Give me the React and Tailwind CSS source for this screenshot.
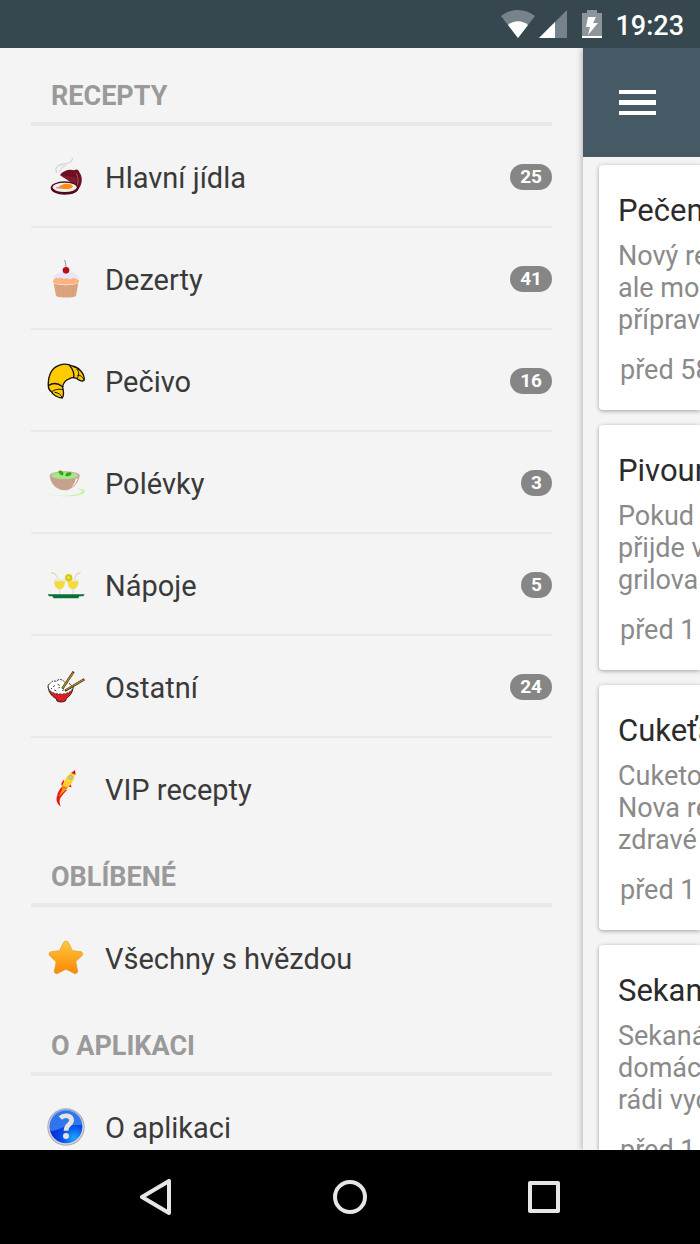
import { useState } from 'react'

function MealIcon() {
  return (
    <svg viewBox="0 0 114 114" className="size-[38px]" aria-hidden="true">
      <path d="M30 45C20 30 34 20 50 18C66 16 78 10 76 0" fill="none" stroke="#d6d6d6" strokeWidth="4" />
      <path d="M40 44C36 34 46 26 58 22" fill="none" stroke="#e2e2e2" strokeWidth="5" />
      <path d="M39 51C48 38 66 32 82 37C86 32 96 34 97 43C107 55 107 77 96 91C90 101 80 108 68 109L86 82Z" fill="#6e0f24" />
      <path d="M39 51L86 82C88 72 90 66 88 58Z" fill="#7d1a2d" />
      <path d="M87 46C95 58 95 74 89 86" fill="none" stroke="#a85b68" strokeWidth="3" />
      <ellipse cx="53" cy="90" rx="42" ry="20" fill="#4e0a1b" />
      <ellipse cx="53" cy="88" rx="36" ry="14" fill="#f4ecea" />
      <path d="M27 87C34 90 38 80 50 80C64 76 78 80 76 88C66 96 44 93 27 91Z" fill="#c9a07a" />
      <ellipse cx="60" cy="85" rx="17" ry="8" fill="#ff8c0a" />
    </svg>
  )
}

function CupcakeIcon() {
  return (
    <svg viewBox="0 0 114 114" className="size-[38px]" aria-hidden="true">
      <path d="M52 0C56 4 56 12 57 24" fill="none" stroke="#7b4a55" strokeWidth="2" />
      <path d="M20 58C16 44 34 36 57 36C80 36 98 44 95 58C84 66 32 66 20 58Z" fill="#e8e6fa" />
      <circle cx="57" cy="31" r="10" fill="#b5101c" />
      <path d="M18 66C18 56 26 58 28 52C34 60 42 50 46 55C52 62 58 50 64 56C70 62 76 50 84 55C88 60 97 56 96 66C92 76 22 76 18 66Z" fill="#ffb27d" />
      <path d="M20 70C40 78 74 78 94 70L87 108C76 114 38 114 27 108Z" fill="#dca47e" />
      <path d="M34 76L38 110M48 78L50 111M64 78L63 111M80 76L76 110" stroke="#d69d76" strokeWidth="2" />
    </svg>
  )
}

function CroissantIcon() {
  return (
    <svg viewBox="0 0 114 114" className="size-[38px]" aria-hidden="true">
      <g fill="#ffcb00" stroke="#111" strokeWidth="4" strokeLinejoin="round" strokeLinecap="round">
        <path d="M4 72C2 44 12 18 36 10C48 5 64 6 76 12C96 16 112 34 112 54C108 60 98 56 90 50C82 46 74 46 68 50C56 54 48 64 47 76C50 88 50 102 46 108C34 108 16 98 14 90C8 86 4 80 4 72Z" />
        <path d="M5 70C18 62 34 64 47 74" fill="none" />
        <path d="M14 90C22 82 36 80 47 83M24 91C34 92 42 98 46 107" fill="none" strokeWidth="3" />
        <path d="M68 10C76 20 82 36 80 47" fill="none" />
        <path d="M90 22C98 30 96 42 90 50M92 40C100 38 106 44 111 53" fill="none" strokeWidth="3" />
      </g>
    </svg>
  )
}

function SoupIcon() {
  return (
    <svg viewBox="0 0 114 114" className="size-[38px]" aria-hidden="true">
      <path d="M2 91C30 96 76 98 100 88C108 84 106 78 92 75C110 72 120 82 108 89C84 100 26 98 2 91Z" fill="#c3f3a2" />
      <path d="M8 34C10 56 22 70 37 76C46 80 60 80 67 76C84 68 96 54 98 34Z" fill="#c6a28e" />
      <path d="M86 44C84 58 76 66 70 70C84 64 92 52 92 42Z" fill="#f7efea" />
      <ellipse cx="53" cy="34" rx="45" ry="12" fill="#c8ae9e" />
      <ellipse cx="53" cy="35" rx="39" ry="10" fill="#a5e88a" />
      <path d="M34 24C36 18 46 18 49 26C52 33 44 36 40 32ZM55 32C58 23 72 23 74 28C74 37 60 39 55 35Z" fill="#38a511" />
    </svg>
  )
}

function DrinksIcon() {
  return (
    <svg viewBox="0 0 114 114" className="size-[38px]" aria-hidden="true">
      <path d="M12 20L24 23L36 42M101 20L90 23L80 42" fill="none" stroke="#efc8a4" strokeWidth="3" />
      <path d="M22 38H54C56 60 48 68 38 72C26 68 20 58 22 38ZM62 38H94C96 60 88 68 78 72C66 68 60 58 62 38Z" fill="#e6ebe8" />
      <path d="M22 46H54C55 60 48 68 38 70C27 67 21 60 22 46ZM62 46H94C95 60 88 68 78 70C67 67 61 60 62 46Z" fill="#f6da3c" />
      <path d="M38 70V86M78 70V86" stroke="#d5ddd8" strokeWidth="3" />
      <circle cx="65" cy="35" r="11" fill="#d7c90c" />
      <circle cx="65" cy="35" r="4" fill="#efe56b" />
      <path d="M2 85H113L109 91H97L94 97H20L16 91H6Z" fill="#08713a" />
    </svg>
  )
}

function RiceIcon() {
  return (
    <svg viewBox="0 0 114 114" className="size-[38px]" aria-hidden="true">
      <path d="M4 50C1 68 14 86 28 92L30 99C36 103 50 103 56 98L58 91C70 84 79 70 78 54Z" fill="#e01c22" stroke="#222" strokeWidth="3" />
      <path d="M4 60C2 46 12 46 14 42C20 34 28 44 30 38C38 30 52 38 54 44C64 42 74 50 78 60C72 74 54 80 38 78C22 78 8 72 4 60Z" fill="#fff" stroke="#333" strokeWidth="3" strokeDasharray="7 3" />
      <path d="M18 56L23 53M32 49L38 52M22 66L28 69M46 68L51 65M34 61L38 57M62 64L67 61M12 63L15 60" stroke="#333" strokeWidth="3" />
      <path d="M46 62L80 11M54 68L112 34" stroke="#2c220a" strokeWidth="7" />
      <path d="M47 60L79 13M56 66L110 35" stroke="#b28a24" strokeWidth="4" />
    </svg>
  )
}

function RocketIcon() {
  return (
    <svg viewBox="0 0 114 114" className="size-[38px]" aria-hidden="true">
      <path d="M43 51C48 60 60 62 63 58C54 66 46 76 40 84C36 94 38 100 41 110C28 100 26 88 31 76C31 68 38 60 43 51Z" fill="#e31b13" />
      <path d="M48 53C44 62 38 70 36 80C42 72 52 64 60 57Z" fill="#ff9d0a" />
      <path d="M50 29L43 40L44 48L55 42ZM68 36L74 52L65 50L61 44Z" fill="#dc2217" />
      <path d="M84 0C86 18 78 39 63 52L46 47C51 29 66 10 84 0Z" fill="#ffd22e" />
      <path d="M46 47L63 52L58 58L44 54Z" fill="#f07812" />
      <path d="M84 0L86 14L73 9Z" fill="#d5151b" />
      <circle cx="71" cy="22" r="5" fill="#bfe0ef" stroke="#7c8c92" strokeWidth="2" />
    </svg>
  )
}

function StarIcon() {
  return (
    <svg viewBox="0 0 114 114" className="size-[38px]" aria-hidden="true">
      <defs>
        <linearGradient id="star-fill" x1="0" y1="0" x2="0" y2="1">
          <stop offset="0" stopColor="#ffc83e" />
          <stop offset="1" stopColor="#fb8604" />
        </linearGradient>
      </defs>
      <path
        d="M50 10C53 5 61 5 64 10L75 32Q76 34 79 35L102 38C108 40 109 45 105 50L88 66Q87 68 87 71L92 96C92 103 86 106 81 103L60 92Q57 91 54 92L33 103C27 106 21 102 22 96L27 71Q27 68 25 66L8 50C4 45 6 40 12 38L35 35Q38 34 39 32Z"
        fill="url(#star-fill)"
        stroke="#dd9a3c"
        strokeWidth="2"
      />
    </svg>
  )
}

function HelpIcon() {
  return (
    <svg viewBox="0 0 114 114" className="size-[38px]" aria-hidden="true">
      <defs>
        <radialGradient id="help-fill" cx="0.75" cy="0.85" r="0.8">
          <stop offset="0" stopColor="#1ea8ff" />
          <stop offset="0.5" stopColor="#0848e8" />
          <stop offset="1" stopColor="#0428c8" />
        </radialGradient>
      </defs>
      <circle cx="57" cy="57" r="56" fill="#a9a9b2" />
      <circle cx="57" cy="57" r="53" fill="#d8d8dd" />
      <circle cx="57" cy="57" r="49" fill="url(#help-fill)" />
      <path d="M8 57A49 49 0 0 1 106 50C84 52 66 50 48 58C34 66 20 68 10 70Z" fill="#3f8cf5" opacity="0.75" />
      <path d="M40 30C50 20 74 20 74 38C72 51 57 49 57 68" fill="none" stroke="#e6e4e0" strokeWidth="14" />
      <circle cx="57" cy="84" r="9" fill="#e6e4e0" />
    </svg>
  )
}

const SECTIONS = [
  {
    title: 'RECEPTY',
    items: [
      { label: 'Hlavní jídla', icon: MealIcon, count: 25 },
      { label: 'Dezerty', icon: CupcakeIcon, count: 41 },
      { label: 'Pečivo', icon: CroissantIcon, count: 16 },
      { label: 'Polévky', icon: SoupIcon, count: 3 },
      { label: 'Nápoje', icon: DrinksIcon, count: 5 },
      { label: 'Ostatní', icon: RiceIcon, count: 24 },
      { label: 'VIP recepty', icon: RocketIcon },
    ],
  },
  { title: 'OBLÍBENÉ', items: [{ label: 'Všechny s hvězdou', icon: StarIcon }] },
  { title: 'O APLIKACI', items: [{ label: 'O aplikaci', icon: HelpIcon }] },
]

const RECIPES = [
  { title: 'Pečen', lines: ['Nový re', 'ale mo', 'příprav'], time: 'před 58' },
  { title: 'Pivoun', lines: ['Pokud', 'přijde v', 'grilova'], time: 'před 1' },
  { title: 'Cukeťa', lines: ['Cuketo', 'Nova re', 'zdravé'], time: 'před 1' },
  { title: 'Sekan', lines: ['Sekaná', 'domác', 'rádi vyc'], time: 'před 1' },
]

function StatusBar() {
  return (
    <header className="flex h-12 shrink-0 items-center justify-end bg-[#37474f] pr-4 text-white">
      <svg viewBox="0 0 34 28" className="mr-1 h-7 w-[34px]" aria-label="Wi-Fi">
        <path d="M0 6C10-2 24-2 34 6L17 28Z" fill="#77838a" />
        <path d="M7 15C13 10 21 10 27 15L17 28Z" fill="#fff" />
      </svg>
      <svg viewBox="0 0 28 28" className="mr-[15px] size-7" aria-label="Signal">
        <path d="M28 0V28H0Z" fill="#77838a" />
        <path d="M16 12V28H0Z" fill="#fff" />
      </svg>
      <svg viewBox="0 0 20 28" className="mr-[13px] h-7 w-5" aria-label="Battery">
        <path d="M5 0H15V3H20V28H0V3H5Z" fill="#8b959a" />
        <path d="M0 26H20V28H0Z" fill="#fff" />
        <path d="M6 7H14L11 13H16L6 25L8 17H4Z" fill="#fff" />
      </svg>
      <span className="pt-1 text-[27px] leading-8 font-medium">19:23</span>
    </header>
  )
}

function MenuSection({ title, items, active, onSelect }) {
  return (
    <section>
      <h2 className="flex h-[67px] items-center border-b-4 border-[#e9e9e7] px-5 pt-3 text-[27px] font-bold text-[#9a9a9a]">
        {title}
      </h2>
      <ul>
        {items.map(({ label, icon: Icon, count }) => (
          <li key={label} className="border-b-2 border-[#e9e9e7] last:border-transparent">
            <button
              onClick={() => onSelect(label)}
              aria-current={active === label}
              className="flex h-[100px] w-full items-center gap-5 pt-[2px] pl-4 text-left"
            >
              <Icon />
              <span className="flex-1 pt-[2px] text-[29px] leading-9 text-[#3a3a3a]">{label}</span>
              {count != null && (
                <span className="rounded-full bg-[#868686] px-[10px] text-[19px] leading-[26px] font-bold text-white">
                  {count}
                </span>
              )}
            </button>
          </li>
        ))}
      </ul>
    </section>
  )
}

function RecipeCard({ recipe }) {
  return (
    <article className="mb-[15px] shrink-0 rounded-l bg-white pt-[26px] pb-6 pl-[19px] whitespace-nowrap shadow-[0_1px_4px_rgba(0,0,0,0.35)]">
      <h3 className="text-[31px] leading-10 text-[#2b2b2b]">{recipe.title}</h3>
      <p className="mt-[9px] text-[27px] leading-8 text-[#8a8a8a]">
        {recipe.lines.map((line) => (
          <span key={line} className="block">{line}</span>
        ))}
      </p>
      <p className="mt-[18px] pl-[2px] text-[27px] leading-8 text-[#8a8a8a]">{recipe.time}</p>
    </article>
  )
}

export default function App() {
  const [active, setActive] = useState(null)

  return (
    <div className="flex h-screen flex-col overflow-hidden bg-[#f4f4f4] font-[Roboto,sans-serif]">
      <StatusBar />

      <div className="flex min-h-0 flex-1 overflow-hidden">
        <nav className="min-w-0 flex-1 overflow-hidden px-[31px] pt-[11px]">
          {SECTIONS.map((section) => (
            <MenuSection key={section.title} {...section} active={active} onSelect={setActive} />
          ))}
        </nav>

        <main className="z-10 flex w-[117px] shrink-0 flex-col bg-[#f4f4f4] shadow-[0_0_7px_rgba(0,0,0,0.35)]">
          <div className="flex h-[109px] shrink-0 items-center bg-[#455a64] pl-9">
            <button aria-label="Menu">
              <svg viewBox="0 0 37 25" className="h-[25px] w-[37px]" fill="#fff">
                <path d="M0 0H37V4H0ZM0 10H37V15H0ZM0 21H37V25H0Z" />
              </svg>
            </button>
          </div>
          <div className="flex min-h-0 flex-1 flex-col overflow-hidden pt-2 pl-4">
            {RECIPES.map((recipe) => (
              <RecipeCard key={recipe.title} recipe={recipe} />
            ))}
          </div>
        </main>
      </div>

      <footer className="flex h-[94px] shrink-0 items-center justify-center bg-black">
        <button aria-label="Back" className="flex w-[194px] justify-center">
          <svg viewBox="0 0 36 36" className="size-9" fill="none" stroke="#e6e6e6" strokeWidth="4" strokeLinejoin="round">
            <path d="M4 18L31 2V34Z" />
          </svg>
        </button>
        <button aria-label="Home" className="flex w-[194px] justify-center">
          <svg viewBox="0 0 36 36" className="size-9" fill="none" stroke="#e6e6e6" strokeWidth="4">
            <circle cx="18" cy="18" r="15" />
          </svg>
        </button>
        <button aria-label="Recent apps" className="flex w-[194px] justify-center">
          <svg viewBox="0 0 36 36" className="size-9" fill="none" stroke="#e6e6e6" strokeWidth="4" strokeLinejoin="round">
            <rect x="4" y="4" width="28" height="28" />
          </svg>
        </button>
      </footer>
    </div>
  )
}
